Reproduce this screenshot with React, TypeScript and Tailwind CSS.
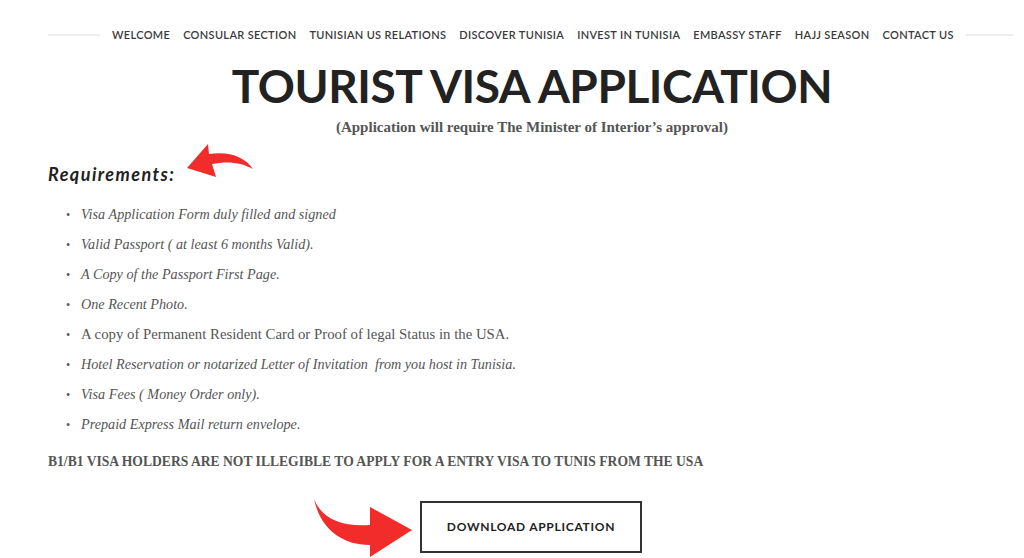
const navItems = [
  "WELCOME",
  "CONSULAR SECTION",
  "TUNISIAN US RELATIONS",
  "DISCOVER TUNISIA",
  "INVEST IN TUNISIA",
  "EMBASSY STAFF",
  "HAJJ SEASON",
  "CONTACT US",
];

const requirements = [
  { text: "Visa Application Form duly filled and signed", italic: true },
  { text: "Valid Passport ( at least 6 months Valid).", italic: true },
  { text: "A Copy of the Passport First Page.", italic: true },
  { text: "One Recent Photo.", italic: true },
  { text: "A copy of Permanent Resident Card or Proof of legal Status in the USA.", italic: false },
  { text: "Hotel Reservation or notarized Letter of Invitation \u00a0from you host in Tunisia.", italic: true },
  { text: "Visa Fees ( Money Order only).", italic: true },
  { text: "Prepaid Express Mail return envelope.", italic: true },
];

function CurlArrowLeft() {
  // red curved arrow pointing back at the heading
  return (
    <svg width="72" height="40" viewBox="0 0 72 40" className="absolute left-[185px] top-[141px]">
      <path
        d="M2 27 L23 3 L24 13 C44 10 60 16 68 28 C56 21 42 20 27 23 L31 36 Z"
        fill="#f22b2b"
      />
    </svg>
  );
}

function CurlArrowRight() {
  return (
    <svg width="104" height="64" viewBox="0 0 104 64" className="absolute left-[312px] top-[495px]">
      <path
        d="M2 4 C10 24 30 32 58 30 L58 12 L100 35 L58 62 L58 50 C28 50 8 32 2 4 Z"
        fill="#f22b2b"
      />
    </svg>
  );
}

export default function App() {
  return (
    <div className="relative w-[1024px] h-[558px] overflow-hidden bg-white">
      <nav className="flex items-center pt-[28px] pl-[48px] pr-[11px] gap-[12px]">
        <div className="w-[52px] h-[2px] bg-[#eeeeee]" />
        <ul className="flex gap-[13px] whitespace-nowrap text-[11px] font-semibold tracking-[0.03em] text-[#3a3a3a] font-['Lato',sans-serif]">
          {navItems.map((item) => (
            <li key={item} className="leading-[14px]">{item}</li>
          ))}
        </ul>
        <div className="flex-1 h-[2px] bg-[#eeeeee]" />
      </nav>

      <h1 className="mt-[20px] pl-[40px] text-center text-[46px] leading-[48px] font-bold tracking-[-0.01em] text-[#222] font-['Lato',sans-serif]">
        TOURIST VISA APPLICATION
      </h1>
      <p className="mt-[6px] pl-[40px] text-center text-[15px] font-bold text-[#555] font-['Liberation_Serif',serif]">
        (Application will require The Minister of Interior&rsquo;s approval)
      </p>

      <h2 className="mt-[22px] pl-[48px] text-[18px] italic font-bold tracking-[0.08em] text-[#222] font-['Lato',sans-serif]">
        Requirements:
      </h2>

      <ul className="mt-[12px] pl-[66px] text-[14.2px] text-[#555] font-['Liberation_Serif',serif]">
        {requirements.map((r) => (
          <li key={r.text} className="flex items-center h-[30px]">
            <span className="w-[15px] text-[12px]">&bull;</span>
            <span className={r.italic ? "italic" : "text-[14.8px]"}>{r.text}</span>
          </li>
        ))}
      </ul>

      <p className="mt-[12px] pl-[48px] text-[13.6px] font-bold text-[#555] font-['Liberation_Serif',serif]">
        B1/B1 VISA HOLDERS ARE NOT ILLEGIBLE TO APPLY FOR A ENTRY VISA TO TUNIS FROM THE USA
      </p>

      <div className="mt-[29px] flex justify-center pl-[38px]">
        <button className="w-[222px] h-[52px] border-2 border-[#333] text-[12px] font-bold tracking-[0.06em] text-[#222] font-['Lato',sans-serif]">
          DOWNLOAD APPLICATION
        </button>
      </div>

      <CurlArrowLeft />
      <CurlArrowRight />
    </div>
  );
}
